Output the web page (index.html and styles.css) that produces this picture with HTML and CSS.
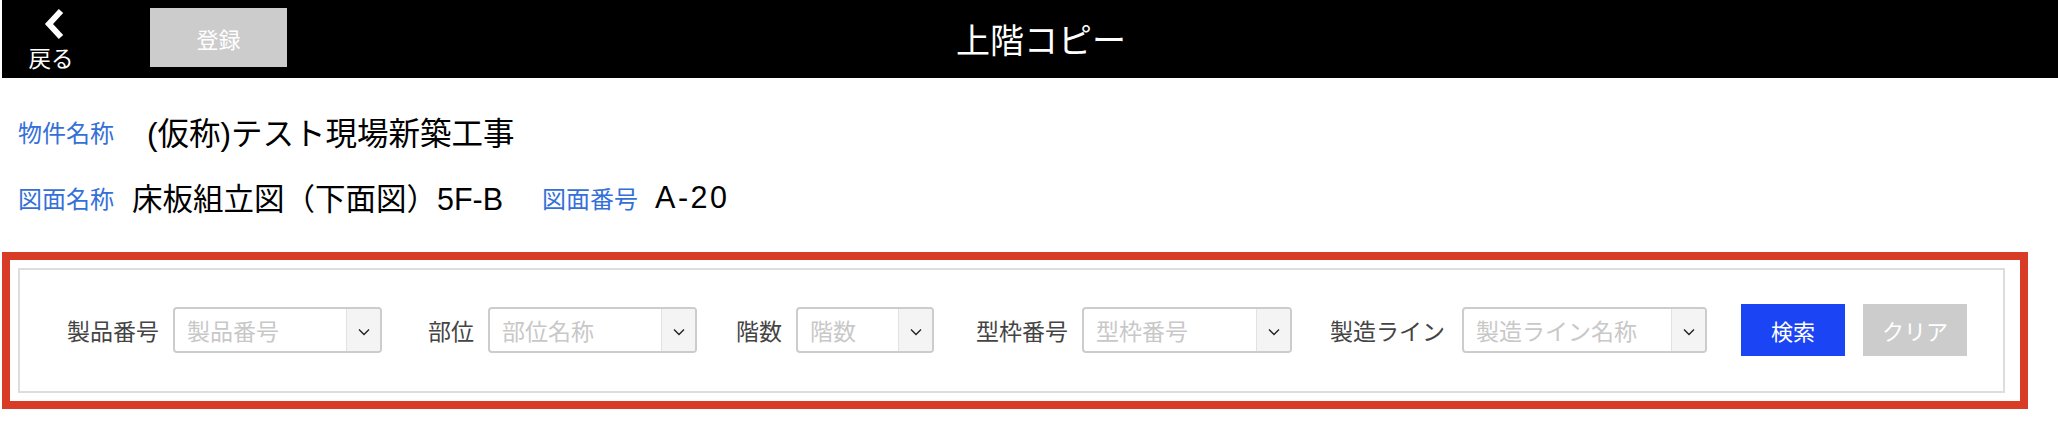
FILE: index.html
```html
<!DOCTYPE html>
<html lang="ja">
<head>
<meta charset="utf-8">
<title>上階コピー</title>
<link rel="stylesheet" href="styles.css">
</head>
<body>
<header class="topbar">
  <div class="topbar-left">
    <div class="back">
      <svg class="back-icon" width="24" height="34" viewBox="0 0 24 34" aria-hidden="true">
        <polyline points="20,4 8,17 20,30" fill="none" stroke="#fff" stroke-width="6" stroke-linejoin="miter"/>
      </svg>
      <span class="back-label">戻る</span>
    </div>
    <button class="btn-register" type="button">登録</button>
  </div>
  <h1 class="title">上階コピー</h1>
  <div class="topbar-right"></div>
</header>

<section class="info">
  <div class="info-row">
    <span class="info-label">物件名称</span>
    <span class="info-value value-lg">(仮称)テスト現場新築工事</span>
  </div>
  <div class="info-row">
    <span class="info-label">図面名称</span>
    <span class="info-value">床板組立図（下面図）5F-B</span>
    <span class="info-label label-spaced">図面番号</span>
    <span class="info-value value-code">A-20</span>
  </div>
</section>

<section class="search-frame">
  <div class="search-panel">
    <div class="field field-1">
      <span class="field-label">製品番号</span>
      <div class="select w-209">
        <span class="placeholder">製品番号</span>
        <span class="select-arrow"><svg width="12" height="8" viewBox="0 0 12 8"><polyline points="1,1.5 6,6.5 11,1.5" fill="none" stroke="#222" stroke-width="1.4"/></svg></span>
      </div>
    </div>
    <div class="field field-2">
      <span class="field-label">部位</span>
      <div class="select w-209">
        <span class="placeholder">部位名称</span>
        <span class="select-arrow"><svg width="12" height="8" viewBox="0 0 12 8"><polyline points="1,1.5 6,6.5 11,1.5" fill="none" stroke="#222" stroke-width="1.4"/></svg></span>
      </div>
    </div>
    <div class="field field-3">
      <span class="field-label">階数</span>
      <div class="select w-138">
        <span class="placeholder">階数</span>
        <span class="select-arrow"><svg width="12" height="8" viewBox="0 0 12 8"><polyline points="1,1.5 6,6.5 11,1.5" fill="none" stroke="#222" stroke-width="1.4"/></svg></span>
      </div>
    </div>
    <div class="field field-4">
      <span class="field-label">型枠番号</span>
      <div class="select w-210">
        <span class="placeholder">型枠番号</span>
        <span class="select-arrow"><svg width="12" height="8" viewBox="0 0 12 8"><polyline points="1,1.5 6,6.5 11,1.5" fill="none" stroke="#222" stroke-width="1.4"/></svg></span>
      </div>
    </div>
    <div class="field field-5">
      <span class="field-label">製造ライン</span>
      <div class="select w-245">
        <span class="placeholder">製造ライン名称</span>
        <span class="select-arrow"><svg width="12" height="8" viewBox="0 0 12 8"><polyline points="1,1.5 6,6.5 11,1.5" fill="none" stroke="#222" stroke-width="1.4"/></svg></span>
      </div>
    </div>
    <button class="btn btn-search" type="button">検索</button>
    <button class="btn btn-clear" type="button">クリア</button>
  </div>
</section>
</body>
</html>
```

FILE: styles.css
```css
* {
  box-sizing: border-box;
}

html, body {
  margin: 0;
  padding: 0;
  background: #fff;
}

body {
  font-family: "Noto Sans CJK JP", "Noto Sans", sans-serif;
  color: #000;
}

/* ---------- top bar ---------- */
.topbar {
  margin-left: 2px;
  height: 78px;
  background: #000;
  display: grid;
  grid-template-columns: 300px 1fr 278px;
  align-items: center;
}

.topbar-left {
  display: flex;
  align-items: flex-start;
  height: 78px;
  padding-left: 26px;
}

.back {
  width: 46px;
  display: flex;
  flex-direction: column;
  align-items: center;
  padding-top: 7px;
  color: #fff;
}

.back-icon {
  display: block;
  margin-left: 4px;
}

.back-label {
  margin-top: 4px;
  font-size: 22.5px;
  line-height: 24px;
  color: #fff;
}

.btn-register {
  margin-left: 76px;
  margin-top: 8px;
  width: 137px;
  height: 59px;
  border: 0;
  background: #cccccc;
  color: #fff;
  font-family: "Noto Sans CJK JP", sans-serif;
  font-size: 22px;
  padding: 0;
}

.title {
  margin: 0;
  text-align: center;
  color: #fff;
  font-size: 34px;
  font-weight: 400;
  line-height: 40px;
}

/* ---------- info ---------- */
.info {
  padding: 33px 0 0 16px;
  margin-left: 2px;
  display: flex;
  flex-direction: column;
  gap: 26px;
}

.info-row {
  display: flex;
  align-items: center;
  height: 40px;
}

.info-label {
  font-size: 24px;
  color: #3470d8;
  white-space: nowrap;
}

.label-spaced {
  margin-left: 39px;
}

.info-value {
  margin-left: 18px;
  font-family: "Liberation Sans", "Noto Sans CJK JP", sans-serif;
  font-size: 30.5px;
  color: #000;
  white-space: nowrap;
}

.value-lg {
  margin-left: 33px;
  font-size: 31.5px;
}

.value-code {
  margin-left: 17px;
  letter-spacing: 2.5px;
}

/* ---------- search ---------- */
.search-frame {
  margin: 35px 30px 0 2px;
  border: 8px solid #d83b26;
  padding: 8px 15px 8px 8px;
}

.search-panel {
  border: 2px solid #dddddd;
  padding: 34px 0 35px 47px;
  display: flex;
  align-items: center;
}

.field {
  display: flex;
  align-items: center;
}

.field-1 { margin-right: 46px; }
.field-2 { margin-right: 39px; }
.field-3 { margin-right: 42px; }
.field-4 { margin-right: 38px; }
.field-5 { margin-right: 34px; }

.field-label {
  font-size: 23px;
  color: #444;
  margin-right: 14px;
  white-space: nowrap;
}

.field-5 .field-label {
  margin-right: 17px;
}

.select {
  height: 46px;
  border: 2px solid #cccccc;
  border-radius: 4px;
  display: flex;
  align-items: stretch;
  overflow: hidden;
  background: #fff;
}

.w-209 { width: 209px; }
.w-138 { width: 138px; }
.w-210 { width: 210px; }
.w-245 { width: 245px; }

.placeholder {
  flex: 1;
  padding-left: 12px;
  font-size: 23px;
  line-height: 42px;
  color: #c8c8c8;
  white-space: nowrap;
  overflow: hidden;
}

.select-arrow {
  width: 34px;
  background: #f4f4f4;
  border-left: 1px solid #e2e2e2;
  display: flex;
  align-items: center;
  justify-content: center;
  padding-top: 4px;
}

.btn {
  width: 104px;
  height: 52px;
  border: 0;
  padding: 0;
  color: #fff;
  font-family: "Noto Sans CJK JP", sans-serif;
  font-size: 22px;
}

.btn-search {
  background: #1b44f5;
}

.btn-clear {
  margin-left: 18px;
  background: #cccccc;
}
```
